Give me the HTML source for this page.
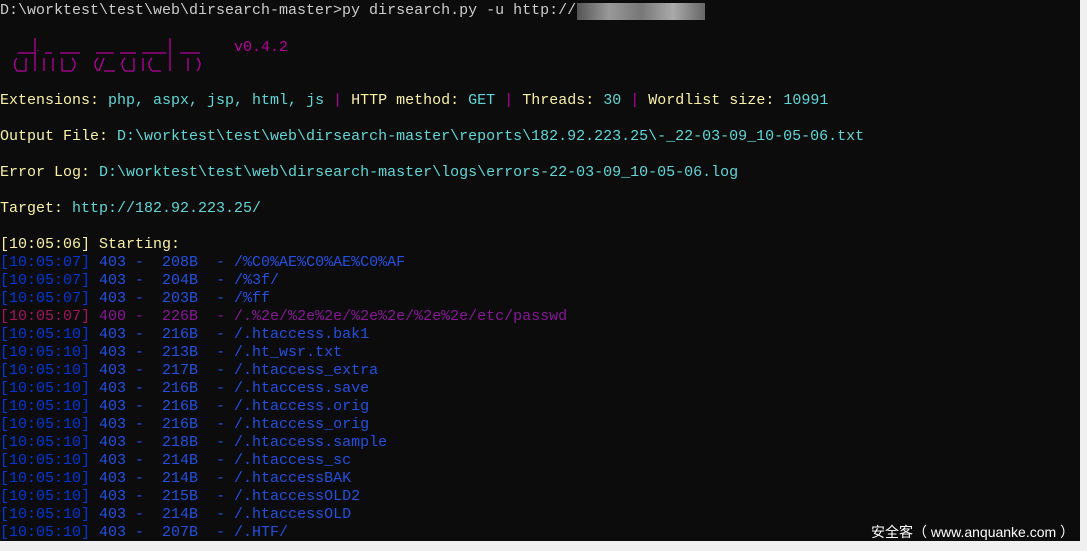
<!DOCTYPE html>
<html><head><meta charset="utf-8"><style>
html,body{margin:0;padding:0;background:#0c0c0c;width:1087px;height:551px;overflow:hidden}
#t{position:absolute;left:0;top:2px;font-family:"Liberation Mono",monospace;font-size:15px;line-height:18px;white-space:pre;color:#cccccc}
.y{color:#f9f1a5}.c{color:#61d6d6}.m{color:#b4009e}.b{color:#0037da}.bl{color:#2450e0}.p{color:#881798}.pr{color:#a3155f}
#sb{position:absolute;left:1080px;top:0;width:7px;height:541px;background:#f0f0f0}
#bot{position:absolute;left:0;top:541px;width:1087px;height:10px;background:#f0f0f0}
#wm{position:absolute;left:871px;top:522px;color:#fff;font-family:"Liberation Sans","Noto Sans CJK SC",sans-serif;font-size:14px;white-space:nowrap}
#blur{position:absolute;left:577px;top:3px;width:128px;height:17px;background:linear-gradient(90deg,#555,#999,#777,#aaa,#666)}
</style></head><body>
<div id="t">D:\worktest\test\web\dirsearch-master&gt;py dirsearch.py -u http://




<span class="y">Extensions: </span><span class="c">php, aspx, jsp, html, js</span> <span class="m">|</span> <span class="y">HTTP method: </span><span class="c">GET</span> <span class="m">|</span> <span class="y">Threads: </span><span class="c">30</span> <span class="m">|</span> <span class="y">Wordlist size: </span><span class="c">10991</span>

<span class="y">Output File: </span><span class="c">D:\worktest\test\web\dirsearch-master\reports\182.92.223.25\-_22-03-09_10-05-06.txt</span>

<span class="y">Error Log: </span><span class="c">D:\worktest\test\web\dirsearch-master\logs\errors-22-03-09_10-05-06.log</span>

<span class="y">Target: </span><span class="c">http://182.92.223.25/</span>

<span class="y">[10:05:06] Starting:</span>
<span class="b">[10:05:07] </span><span class="bl">403 -  208B  - /%C0%AE%C0%AE%C0%AF</span>
<span class="b">[10:05:07] </span><span class="bl">403 -  204B  - /%3f/</span>
<span class="b">[10:05:07] </span><span class="bl">403 -  203B  - /%ff</span>
<span class="pr">[10:05:07] </span><span class="p">400 -  226B  - /.%2e/%2e%2e/%2e%2e/%2e%2e/etc/passwd</span>
<span class="b">[10:05:10] </span><span class="bl">403 -  216B  - /.htaccess.bak1</span>
<span class="b">[10:05:10] </span><span class="bl">403 -  213B  - /.ht_wsr.txt</span>
<span class="b">[10:05:10] </span><span class="bl">403 -  217B  - /.htaccess_extra</span>
<span class="b">[10:05:10] </span><span class="bl">403 -  216B  - /.htaccess.save</span>
<span class="b">[10:05:10] </span><span class="bl">403 -  216B  - /.htaccess.orig</span>
<span class="b">[10:05:10] </span><span class="bl">403 -  216B  - /.htaccess_orig</span>
<span class="b">[10:05:10] </span><span class="bl">403 -  218B  - /.htaccess.sample</span>
<span class="b">[10:05:10] </span><span class="bl">403 -  214B  - /.htaccess_sc</span>
<span class="b">[10:05:10] </span><span class="bl">403 -  214B  - /.htaccessBAK</span>
<span class="b">[10:05:10] </span><span class="bl">403 -  215B  - /.htaccessOLD2</span>
<span class="b">[10:05:10] </span><span class="bl">403 -  214B  - /.htaccessOLD</span>
<span class="b">[10:05:10] </span><span class="bl">403 -  207B  - /.HTF/</span></div>
<div id="blur"></div>
<svg style="position:absolute;left:0;top:0" width="300" height="80">
<g stroke="#b4009e" stroke-width="1.3" fill="none">
<line x1="18" y1="53" x2="34" y2="53"/><line x1="45" y1="53" x2="52" y2="53"/><line x1="60" y1="53" x2="80" y2="53"/>
<line x1="96" y1="53" x2="114" y2="53"/><line x1="120" y1="53" x2="136" y2="53"/><line x1="142" y1="53" x2="166" y2="53"/><line x1="180" y1="53" x2="200" y2="53"/>
<path d="M17 58 Q12 64 17 71"/><line x1="17" y1="71" x2="26" y2="71"/><line x1="26" y1="58" x2="26" y2="71"/>
<line x1="35" y1="38" x2="35" y2="71"/><line x1="44" y1="58" x2="44" y2="71"/><line x1="38" y1="50" x2="38" y2="51"/>
<line x1="53" y1="58" x2="53" y2="71"/><line x1="62" y1="58" x2="62" y2="71"/>
<line x1="62" y1="71" x2="72" y2="71"/><path d="M72 58 Q78 64 72 71"/>
<path d="M98 58 Q92 64 98 71"/><line x1="99" y1="71" x2="104" y2="58"/><line x1="104" y1="71" x2="115" y2="71"/>
<path d="M125 58 Q119 64 125 71"/><line x1="125" y1="71" x2="134" y2="71"/><line x1="134" y1="58" x2="134" y2="71"/>
<line x1="143" y1="58" x2="143" y2="71"/><path d="M152 58 Q146 64 152 71"/><line x1="152" y1="71" x2="161" y2="71"/>
<line x1="170" y1="38" x2="170" y2="71"/><line x1="188" y1="58" x2="188" y2="71"/><path d="M197 58 Q203 64 197 71"/>
</g>
<text x="234" y="51" fill="#b4009e" font-family="Liberation Mono,monospace" font-size="15">v0.4.2</text>
</svg>
<div id="sb"></div>
<div id="bot"></div>
<div id="wm">安全客（ www.anquanke.com ）</div>
</body></html>
